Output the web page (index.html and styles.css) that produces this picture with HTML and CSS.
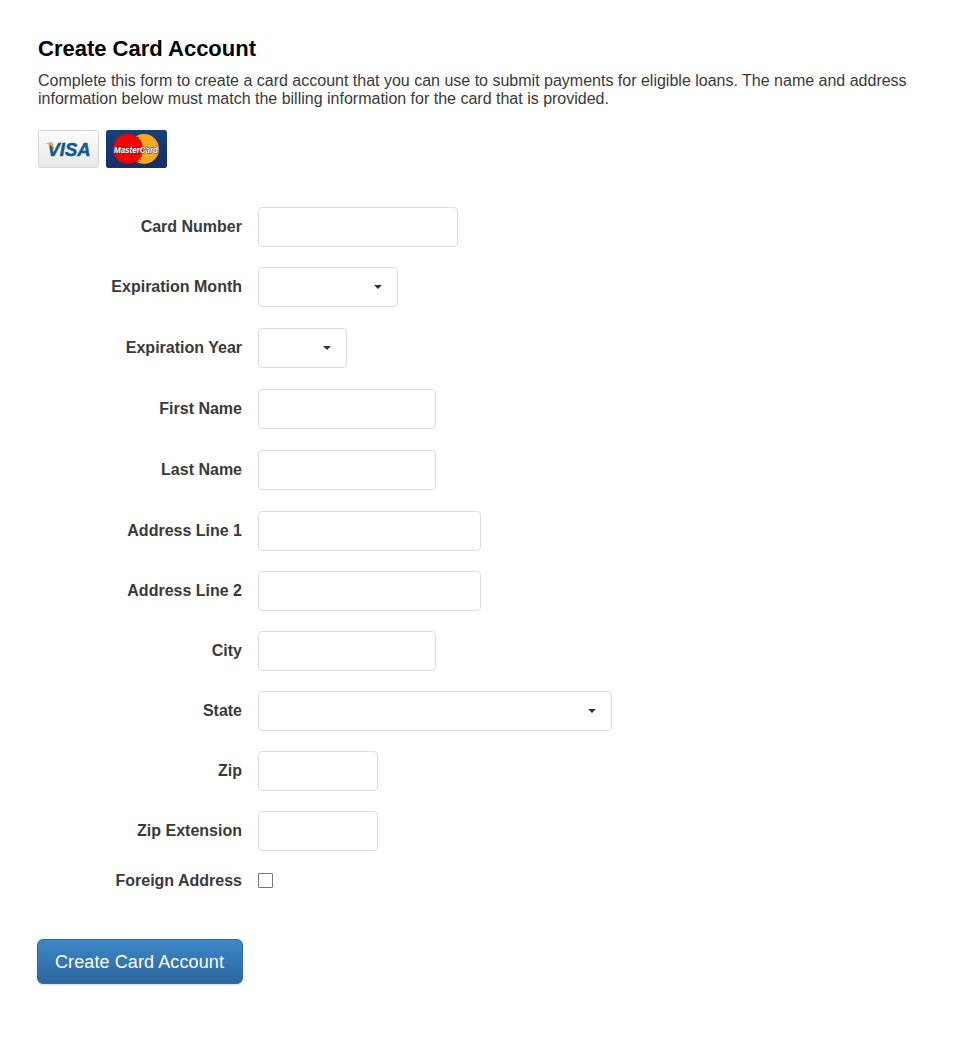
FILE: index.html
```html
<!DOCTYPE html>
<html lang="en">
  <head>
    <meta charset="UTF-8" />
    <meta name="viewport" content="width=device-width, initial-scale=1.0" />
    <title>Create Card Account</title>
    <link rel="stylesheet" href="styles.css">
  </head>
  <body>
    <form class="card-form">
      <h1>Create Card Account</h1>
      <p class="intro">Complete this form to create a card account that you can use to submit payments for eligible loans. The name and address information below must match the billing information for the card that is provided.</p>

      <div class="card-logos">
        <svg class="card-logo" width="61" height="38" viewBox="0 0 61 38">
          <defs>
            <linearGradient id="visaBg" x1="0" y1="0" x2="0" y2="1">
              <stop offset="0" stop-color="#fcfcfc" />
              <stop offset="1" stop-color="#e8e8e8" />
            </linearGradient>
          </defs>
          <rect x="0.5" y="0.5" width="60" height="37" rx="2" fill="url(#visaBg)" stroke="#d8d8d8" />
          <text x="9.5" y="26" class="visa-text" textLength="43" lengthAdjust="spacingAndGlyphs">VISA</text>
          <path d="M7 13 L13.5 13 C14.5 13 15 13.5 15.2 14.5 L16.3 20 C14.5 16.5 11 14 7 13 Z" fill="#eaa82c" />
        </svg>
        <svg class="card-logo" width="61" height="38" viewBox="0 0 61 38">
          <defs>
            <linearGradient id="mcBg" x1="0" y1="0" x2="0" y2="1">
              <stop offset="0" stop-color="#12437c" />
              <stop offset="1" stop-color="#1b2a6b" />
            </linearGradient>
          </defs>
          <rect width="61" height="38" rx="2.5" fill="url(#mcBg)" />
          <circle cx="38" cy="19" r="15" fill="#f7a81f" />
          <circle cx="22" cy="19" r="15" fill="#f40000" />
          <path d="M27 7.5 H33 M25 10 H35 M24 12.5 H36 M24 15 H36 M24 24 H36 M24 26.5 H36 M25 29 H35 M27 31.5 H33" class="mc-stripes" />
          <text x="8" y="22.5" class="mc-text" textLength="44" lengthAdjust="spacingAndGlyphs">MasterCard</text>
        </svg>
      </div>

      <div class="field">
        <label for="number">Card Number</label>
        <input class="w-200" type="text" id="number" />
      </div>
      <div class="field field-wide-gap">
        <label>Expiration Month</label>
        <div class="select w-140"><span class="caret"></span></div>
      </div>
      <div class="field field-wide-gap">
        <label>Expiration Year</label>
        <div class="select w-89"><span class="caret"></span></div>
      </div>
      <div class="field field-wide-gap">
        <label for="first">First Name</label>
        <input class="w-178" type="text" id="first" />
      </div>
      <div class="field field-wide-gap">
        <label for="last">Last Name</label>
        <input class="w-178" type="text" id="last" />
      </div>
      <div class="field">
        <label for="addr1">Address Line 1</label>
        <input class="w-223" type="text" id="addr1" />
      </div>
      <div class="field">
        <label for="addr2">Address Line 2</label>
        <input class="w-223" type="text" id="addr2" />
      </div>
      <div class="field">
        <label for="city">City</label>
        <input class="w-178" type="text" id="city" />
      </div>
      <div class="field">
        <label>State</label>
        <div class="select w-354"><span class="caret"></span></div>
      </div>
      <div class="field">
        <label for="zip">Zip</label>
        <input class="w-120" type="text" id="zip" />
      </div>
      <div class="field field-tight">
        <label for="zipext">Zip Extension</label>
        <input class="w-120" type="text" id="zipext" />
      </div>
      <div class="field field-check">
        <label for="foreign">Foreign Address</label>
        <span class="checkbox" id="foreign"></span>
      </div>

      <button type="button" class="submit">Create Card Account</button>
    </form>
  </body>
</html>
```

FILE: styles.css
```css
body {
  margin: 0;
  font-family: "Liberation Sans", Arial, sans-serif;
  font-size: 16px;
  color: #3a3a3a;
  background: #fff;
}
.card-form {
  padding: 36px 38px 65px 38px;
}
h1 {
  margin: 0 0 10px 0;
  font-size: 22px;
  line-height: 26px;
  font-weight: bold;
  color: #000;
}
.intro {
  margin: 0 0 22px 0;
  line-height: 18px;
  width: 885px;
}
.card-logos {
  display: flex;
  gap: 7px;
  margin-bottom: 39px;
}
.card-logo {
  display: block;
}
.visa-text {
  font-family: "Liberation Sans", Arial, sans-serif;
  font-size: 19px;
  font-weight: bold;
  font-style: italic;
  fill: #17568f;
  stroke: #17568f;
  stroke-width: 0.5;
}
.mc-stripes {
  stroke: #f40000;
  stroke-width: 1.2;
  fill: none;
}
.mc-text {
  font-family: "Liberation Sans", Arial, sans-serif;
  font-size: 9.5px;
  font-weight: bold;
  font-style: italic;
  fill: #fff;
  stroke: #3a2a3a;
  stroke-width: 0.9;
  paint-order: stroke;
}
.field {
  display: flex;
  align-items: center;
  gap: 16px;
  margin-bottom: 20px;
}
.field-wide-gap {
  margin-bottom: 21px;
}
.field-tight {
  margin-bottom: 21px;
}
.field-check {
  align-items: flex-start;
  margin-bottom: 49px;
}
.field label {
  width: 204px;
  text-align: right;
  font-weight: bold;
  line-height: 18px;
}
input[type="text"],
.select {
  display: flex;
  align-items: center;
  justify-content: flex-end;
  height: 40px;
  box-sizing: border-box;
  border: 1px solid #ddd;
  border-radius: 4px;
  background: #fff;
  padding: 0 15px 0 0;
  margin: 0;
}
.caret {
  width: 0;
  height: 0;
  border-left: 4px solid transparent;
  border-right: 4px solid transparent;
  border-top: 4px solid #333;
}
.w-89 { width: 89px; }
.w-120 { width: 120px; }
.w-140 { width: 140px; }
.w-178 { width: 178px; }
.w-200 { width: 200px; }
.w-223 { width: 223px; }
.w-354 { width: 354px; }
.checkbox {
  display: block;
  width: 15px;
  height: 15px;
  margin-top: 1px;
  box-sizing: border-box;
  border: 1px solid #767676;
  border-radius: 1px;
  background: #fff;
}
.submit {
  display: block;
  margin-left: -1px;
  width: 206px;
  height: 45px;
  padding: 2px 1px 0 0;
  border: 1px solid #2e6da4;
  border-radius: 6px;
  font-family: inherit;
  font-size: 18px;
  letter-spacing: 0.1px;
  color: #fff;
  background: linear-gradient(to bottom, #3d87c6, #2c679f);
  box-shadow: 0 1px 2px rgba(0, 0, 0, 0.15);
  cursor: pointer;
}
```
